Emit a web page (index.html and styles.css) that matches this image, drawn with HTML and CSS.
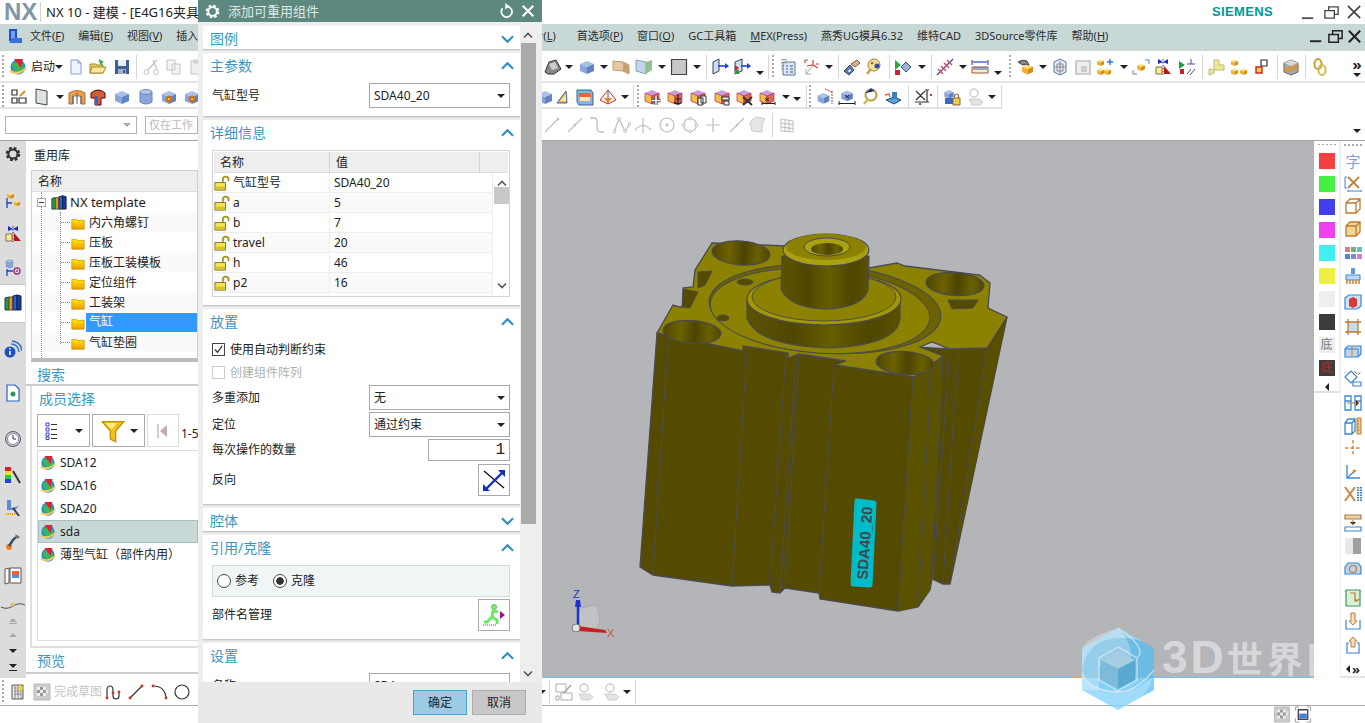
FILE: index.html
```html
<!DOCTYPE html>
<html lang="zh-CN">
<head>
<meta charset="utf-8">
<title>NX 10 - 建模</title>
<link rel="stylesheet" href="styles.css">
</head>
<body>
<svg class="defs" aria-hidden="true">
<defs>
<linearGradient id="fg" x1="0" y1="0" x2="0" y2="1"><stop offset="0" stop-color="#ffe800"/><stop offset="1" stop-color="#f09a00"/></linearGradient>
<linearGradient id="holeg" x1="0" y1="0" x2="1" y2="0"><stop offset="0" stop-color="#4f4600"/><stop offset=".3" stop-color="#6c6200"/><stop offset=".55" stop-color="#4c4400"/><stop offset=".8" stop-color="#6a6000"/><stop offset="1" stop-color="#4f4600"/></linearGradient>
<linearGradient id="neckg" x1="0" y1="0" x2="1" y2="0"><stop offset="0" stop-color="#5c5300"/><stop offset=".3" stop-color="#504700"/><stop offset=".55" stop-color="#665c00"/><stop offset=".8" stop-color="#4f4600"/><stop offset="1" stop-color="#5a5100"/></linearGradient>
<symbol id="cube" viewBox="0 0 18 18"><path fill="#a9c0e8" d="M2 6l7-3 7 3-7 3z"/><path fill="#8aa6d8" d="M2 6l7 3v7l-7-3z"/><path fill="#5f82c4" d="M16 6l-7 3v7l7-3z"/></symbol>
<symbol id="ocube" viewBox="0 0 18 18"><path fill="#ffe27a" d="M2 6l7-3 7 3-7 3z"/><path fill="#f0b030" d="M2 6l7 3v7l-7-3z"/><path fill="#d88a10" d="M16 6l-7 3v7l7-3z"/></symbol>
<symbol id="pcube" viewBox="0 0 18 18"><path fill="#c8a0d8" d="M2 5l7-3 7 3-7 3z"/><path fill="#f4c040" stroke="#a05" stroke-width=".6" d="M2 5l7 3v8l-7-3z"/><path fill="#e06a50" stroke="#a05" stroke-width=".6" d="M16 5l-7 3v8l7-3z"/></symbol>
<symbol id="part" viewBox="0 0 18 18"><circle cx="9" cy="9" r="7.500" fill="#2a86dc"/><path fill="#38b858" d="M3 6q5-4 10-1l2 5-6 5-5-4z"/><path fill="#e0222a" d="M5 1l9 0-2 9z"/><path d="M1 13q8 5 16-3" stroke="#f0cc5c" stroke-width="2.200" fill="none"/></symbol>
<symbol id="doc" viewBox="0 0 18 18"><path fill="#eef2fb" stroke="#8a9cd0" d="M4 2h7l3 3v11H4z"/><path fill="none" stroke="#8a9cd0" d="M11 2v3h3"/></symbol>
<symbol id="folderopen" viewBox="0 0 18 18"><path fill="#e8d060" stroke="#a08a30" d="M1 6h6l1 1h6v8H1z"/><path fill="#f8e8a0" stroke="#a08a30" d="M3 9h14l-3 6H1z"/><path fill="#3aa845" d="M10 1l5 3-2 1 1 3-3-2-1-3z"/></symbol>
<symbol id="save" viewBox="0 0 18 18"><path fill="#3e5f92" d="M2 2h14v14H2z"/><path fill="#e8eef8" d="M5 2h8v6H5z"/><path fill="#9fb0c8" d="M5 11h8v5H5z"/><path fill="#3e5f92" d="M10 12h2v3h-2z"/></symbol>
<symbol id="scis" viewBox="0 0 18 18"><path fill="none" stroke="#c6c6c6" stroke-width="1.400" d="M15 2L6 12M11 2l4 10"/><circle cx="4.500" cy="14" r="2.400" fill="none" stroke="#c6c6c6"/><circle cx="14" cy="14" r="2.400" fill="none" stroke="#c6c6c6"/></symbol>
<symbol id="copy" viewBox="0 0 18 18"><path fill="#f4f4f4" stroke="#c4c4c4" d="M2 2h8v10H2zM7 6h8v10H7z"/></symbol>
<symbol id="paste" viewBox="0 0 18 18"><path fill="#eee" stroke="#c4c4c4" d="M3 3h10v13H3z"/><path fill="#ddd" stroke="#c4c4c4" d="M6 2h4v3H6z"/></symbol>
<symbol id="layers" viewBox="0 0 18 18"><path fill="none" stroke="#333" stroke-width="1.200" d="M2 2h5v5H2zM2 10h5v5H2zM9 10h7v5H9z"/><path stroke="#e08a20" stroke-width="2" d="M10 8l5-5"/></symbol>
<symbol id="plate" viewBox="0 0 18 18"><path fill="#dfe3df" stroke="#444" d="M3 1l11 2v14L3 15z"/></symbol>
<symbol id="arch" viewBox="0 0 18 18"><path fill="#e8a050" stroke="#c06a20" d="M1 5q8-5 16 0v11h-4V8H5v8H1z"/><path stroke="#3a60a0" d="M5 8v8M13 8v8M9 5v11"/></symbol>
<symbol id="tee" viewBox="0 0 18 18"><path fill="#d06030" stroke="#502" d="M2 5q7-6 14 0v5h-4v7H6v-7H2z"/><path fill="#3a60c0" d="M6 8h3v9H6z"/></symbol>
<symbol id="cyl" viewBox="0 0 18 18"><path fill="#8aa6d8" stroke="#6a84b8" d="M3 4v10q6 4 12 0V4z"/><ellipse cx="9" cy="4" rx="6" ry="2.400" fill="#b4c8ec" stroke="#6a84b8"/></symbol>
<symbol id="holec" viewBox="0 0 18 18"><use href="#cube"/><circle cx="9" cy="11" r="3" fill="#f05030" stroke="#a82"/><circle cx="9" cy="11" r="1.200" fill="#fc0"/></symbol>
<symbol id="sheet" viewBox="0 0 18 18"><path fill="#888" stroke="#333" d="M1 14l4-10 7-2 5 9-7 5H4z"/><path fill="#ccc" d="M5 6l6-2 3 6-6 2z"/></symbol>
<symbol id="tan" viewBox="0 0 18 18"><path fill="#e8c8a0" stroke="#b89a78" d="M1 3l10 1 6 3v9l-6-3-10-1z"/><path fill="#c8a070" d="M11 4l6 3v9l-6-3z"/></symbol>
<symbol id="sheet2" viewBox="0 0 18 18"><path fill="#c0d4ec" stroke="#8aa0b8" d="M1 2l10 2v12l-10-3z"/><path fill="#90c090" d="M11 4l6-2v10l-6 4z"/></symbol>
<symbol id="gsq" viewBox="0 0 18 18"><path fill="#c8c8c8" stroke="#444" stroke-width="1.200" d="M1.500 1.500h15v15h-15z"/></symbol>
<symbol id="mov" viewBox="0 0 18 18"><path fill="#cfdcf0" stroke="#345" d="M2 4l6-3v12l-6 3z"/><path stroke="#1a40e0" stroke-width="1.600" d="M7 8h8"/><path fill="#1a40e0" d="M14 5l4 3-4 3z"/></symbol>
<symbol id="mov2" viewBox="0 0 18 18"><path fill="#cfdcf0" stroke="#345" d="M2 4l7-3v12l-7 3z"/><path fill="#d02020" d="M2 7l4 3-4 3z"/><path fill="#2a9a3a" d="M3 12h3v4H3z"/><path stroke="#1a40e0" stroke-width="1.600" d="M8 8h7"/><path fill="#1a40e0" d="M14 5l4 3-4 3z"/></symbol>
<symbol id="notes" viewBox="0 0 18 18"><path fill="#dfe7f2" stroke="#5a7a8a" d="M4 4h12v13H4z"/><path fill="#eef" stroke="#7a9a9a" d="M2 2q3-1 6 0M2 5q3-1 6 0M2 8q2-1 3 0M2 11q2-1 3 0"/><path stroke="#35a" d="M7 8h2m2 0h3M7 11h2m2 0h3M7 14h2m2 0h3"/></symbol>
<symbol id="csys" viewBox="0 0 18 18"><path fill="none" stroke="#d04030" stroke-width="1.200" d="M4 8l6-1 5 3M10 7V2M2 2h3M2 2v3M13 6h3"/><path fill="none" stroke="#aaa" d="M10 8L3 16M3 11v5h5"/></symbol>
<symbol id="diam" viewBox="0 0 18 18"><path fill="#5c78b0" stroke="#345" d="M1 13l6-6 4 5-5 5z"/><path fill="#fff" d="M5 13l2-2 1 2-2 1z"/><path fill="#d8b090" stroke="#854" d="M8 6l6-4 3 3-5 4z"/></symbol>
<symbol id="key" viewBox="0 0 18 18"><circle cx="10" cy="7" r="6" fill="#f0e0a0" stroke="#a08030"/><circle cx="13" cy="8" r="2.500" fill="#3a4aa0"/><circle cx="8" cy="5" r="1.200" fill="#d04030"/><path stroke="#c8a030" stroke-width="2.400" d="M7 11l-4 5"/></symbol>
<symbol id="tri" viewBox="0 0 18 18"><path fill="#2aa844" d="M1 2l6 5-6 5z"/><path fill="#d02030" d="M1 12h5v5H1z"/><path fill="#9ab0d8" stroke="#456" d="M7 9l5-5 5 5-5 5z"/></symbol>
<symbol id="hatch" viewBox="0 0 18 18"><path stroke="#3a50a0" stroke-width="1.200" d="M1 17L17 1"/><path stroke="#e04060" stroke-width="1.400" d="M2 11l5 5M5 8l5 5M8 5l5 5M11 2l5 5"/></symbol>
<symbol id="ruler" viewBox="0 0 18 18"><path stroke="#333" d="M1 2v5M17 2v5"/><path stroke="#1a40e0" stroke-width="1.200" d="M2 4h14"/><path fill="#f8ecc0" stroke="#a05040" d="M1 9h16v6H1z"/><path stroke="#3a60c0" d="M3 9v3M5 9v3M7 9v3M9 9v3M11 9v3M13 9v3M15 9v3"/></symbol>
<symbol id="handcube" viewBox="0 0 18 18"><use href="#ocube" x="3" y="4" width="15" height="14"/><path fill="#888" stroke="#444" d="M1 4q4-3 9-1l2 4-3-1-2 1-3-1z"/></symbol>
<symbol id="wire" viewBox="0 0 18 18"><path fill="#e6ecf6" stroke="#5870b0" d="M3 4l6-3 6 3v10l-6 3-6-3z"/><path fill="none" stroke="#888" d="M6 6h6v7H6zM9 3v13M4 9h10"/></symbol>
<symbol id="gbox" viewBox="0 0 18 18"><path fill="#eee" stroke="#c0c0c0" stroke-width="1.600" d="M2 3h14v13H2z"/><path fill="#ccc" d="M7 8h6v6H7z"/></symbol>
<symbol id="cubeplus" viewBox="0 0 18 18"><use href="#ocube" x="0" y="0" width="9" height="9"/><use href="#ocube" x="0" y="9" width="9" height="9"/><use href="#ocube" x="7" y="9" width="9" height="9"/><path stroke="#2a70f0" stroke-width="1.400" d="M14 1v6M11 4h6"/></symbol>
<symbol id="cubecor" viewBox="0 0 18 18"><use href="#ocube" x="4" y="4" width="10" height="10"/><path fill="none" stroke="#5a80c0" d="M13 2h4v4M5 16H1v-4"/></symbol>
<symbol id="mirror" viewBox="0 0 18 18"><path fill="#1a30c0" d="M4 1l5 3 5-3v5l-5-2-5 2z"/><path stroke="#333" stroke-dasharray="1.500" d="M9 1v16"/><path fill="#f8f088" stroke="#865" d="M2 9h6v7H2z"/><path fill="#b81818" d="M10 8l7 8h-7z"/></symbol>
<symbol id="perp" viewBox="0 0 18 18"><path fill="#1aa040" d="M1 3l6 4-6 4z"/><path fill="#c82020" d="M2 11h4v5H2z"/><path stroke="#604090" d="M9 6h8M13 1v5M9 16l4-5M12 17l5-6"/></symbol>
<symbol id="ykey" viewBox="0 0 18 18"><path fill="#f0e890" stroke="#c0b880" d="M7 2h5v5h5v5H7zM2 11l5 1v3l-5 2z"/></symbol>
<symbol id="cubes3" viewBox="0 0 18 18"><use href="#ocube" x="0" y="0" width="9" height="9"/><use href="#ocube" x="0" y="9" width="9" height="9"/><use href="#ocube" x="9" y="9" width="9" height="9"/></symbol>
<symbol id="squares" viewBox="0 0 18 18"><path fill="#fff" stroke="#333" stroke-width="1.200" d="M8 2h6v6H8z"/><path fill="#fc4" stroke="#d02020" stroke-width="1.400" d="M3 9h6v6H3z"/></symbol>
<symbol id="gbox2" viewBox="0 0 18 18"><path fill="#a8a8a8" stroke="#666" d="M2 5l7-3 7 3v9l-7 3-7-3z"/><path fill="#d8d8d8" d="M2 5l7-3 7 3-7 3z"/><path fill="none" stroke="#e09020" stroke-width="1.400" d="M2 12l10-4 4 1-11 5z"/></symbol>
<symbol id="chain" viewBox="0 0 18 18"><ellipse cx="7" cy="6" rx="3.600" ry="5" fill="none" stroke="#c8a030" stroke-width="2"/><ellipse cx="11" cy="12" rx="3.600" ry="5" fill="none" stroke="#d8b850" stroke-width="2"/></symbol>
<symbol id="face" viewBox="0 0 18 18"><path fill="#f0b040" stroke="#3a60c0" d="M3 15L12 3l1 12z"/><path fill="#f8e8a0" d="M6 13l6-7v7z"/></symbol>
<symbol id="box3" viewBox="0 0 18 18"><path fill="#8fb0d8" stroke="#3a60a0" d="M1 2h14l2 3v12H3L1 14z"/><path fill="#f06040" d="M3 5h12v4H3z"/><path fill="#f8e8b0" d="M4 9h10v4H4z"/></symbol>
<symbol id="pyr" viewBox="0 0 18 18"><path fill="#f8f4e8" stroke="#d83020" d="M9 2l8 10-8 4-8-4z"/><path stroke="#3a60c0" d="M9 2v14"/><path fill="#e88030" d="M5 10h8l-4 5z"/></symbol>
<symbol id="pplus" viewBox="0 0 18 18"><use href="#pcube"/><path stroke="#444" stroke-width="3.400" d="M13 8v9M8.500 12.500h9"/><path stroke="#eee" stroke-width="1.600" d="M13 8v9M8.500 12.500h9"/></symbol>
<symbol id="panch" viewBox="0 0 18 18"><use href="#pcube"/><path fill="none" stroke="#222" stroke-width="1.200" d="M12 6v11M9 11h6M8 14q4 4 8 0"/></symbol>
<symbol id="pcopy" viewBox="0 0 18 18"><use href="#pcube"/><path fill="#fff" stroke="#333" d="M9 10h5v7H9zM12 8h5v7h-5z"/></symbol>
<symbol id="pscale" viewBox="0 0 18 18"><use href="#pcube"/><path fill="#eee" stroke="#333" d="M9 9h7v3H9zM11 13h5v4h-5z"/></symbol>
<symbol id="px" viewBox="0 0 18 18"><use href="#pcube"/><path stroke="#333" stroke-width="2" d="M8 9l9 8M17 9l-9 8"/></symbol>
<symbol id="pdim" viewBox="0 0 18 18"><use href="#pcube"/><path stroke="#222" d="M7 10l4 3m0-3l-4 3M4 14v3M17 14v3M4 15.500h13"/></symbol>
<symbol id="dimbox" viewBox="0 0 18 18"><use href="#cube" x="0" y="2" width="15" height="16"/><path stroke="#d03030" stroke-dasharray="2 1" d="M16 3v13M9 1l7 3"/></symbol>
<symbol id="xdim" viewBox="0 0 18 18"><use href="#cube" x="1" y="0" width="16" height="15"/><path stroke="#222" d="M7 7l4 3m0-3l-4 3M1 13v4M17 13v4M1 15.500h16"/></symbol>
<symbol id="keyg" viewBox="0 0 18 18"><circle cx="10" cy="7" r="5.500" fill="none" stroke="#b8a040" stroke-width="2"/><path stroke="#3a50a0" stroke-width="1.600" d="M5 5l5-4 3 2"/><path stroke="#d8b840" stroke-width="2.400" d="M7 11l-4 5"/></symbol>
<symbol id="mach" viewBox="0 0 18 18"><path fill="#5aa0d8" stroke="#246" d="M2 12l8-3 7 3-7 4z"/><path fill="#3a80c0" d="M8 4h5v7H8z"/><path stroke="#e06030" stroke-width="1.400" fill="none" d="M1 7l4-1 1 3"/></symbol>
<symbol id="xi" viewBox="0 0 18 18"><path stroke="#333" stroke-width="1.200" d="M2 3l9 9M11 3l-9 9M13 2v12M11 2h4M11 14h4M1 14h11"/><path stroke="#d03030" d="M16 6l2 2m0-2l-2 2M5 15l2 2m0-2l-2 2"/></symbol>
<symbol id="lockc" viewBox="0 0 18 18"><use href="#cube" x="0" y="0" width="12" height="12"/><path fill="#3a6ac8" d="M2 10h9v6H2z"/><path fill="#f0d040" stroke="#864" d="M10 10h7v7h-7z"/><path fill="none" stroke="#864" stroke-width="1.200" d="M11.500 10V8a2 2 0 0 1 4 0v2"/></symbol>
<symbol id="ghand" viewBox="0 0 18 18"><circle cx="8" cy="5" r="4" fill="none" stroke="#ccc" stroke-width="1.400"/><path fill="#e4e4e4" stroke="#ccc" d="M3 11h10l4 3-3 3H6z"/></symbol>
<symbol id="gsk" viewBox="0 0 18 18"><path fill="none" stroke="#aaa" d="M1 1h10v8H1zM6 10h11v7H6zM1 13h3v4H1z"/><path stroke="#aaa" stroke-width="1.600" d="M9 10l7-8"/></symbol>
<symbol id="g1" viewBox="0 0 18 18"><path fill="none" stroke="#bdbdbd" stroke-width="1.100" d="M2 16L15 3"/><circle cx="15" cy="3" r="1.300" fill="#bdbdbd"/></symbol>
<symbol id="g2" viewBox="0 0 18 18"><path fill="none" stroke="#bdbdbd" stroke-width="1.100" d="M2 16L16 2"/><circle cx="9" cy="9" r="1.300" fill="#bdbdbd"/></symbol>
<symbol id="g3" viewBox="0 0 18 18"><path fill="none" stroke="#bdbdbd" stroke-width="1.300" d="M2 2h4q3 0 3 4v6q0 4 4 4h3"/></symbol>
<symbol id="g4" viewBox="0 0 18 18"><path fill="none" stroke="#bdbdbd" stroke-width="1.200" d="M1 16L6 3l6 12 5-7"/><g fill="#fff" stroke="#bdbdbd"><circle cx="6" cy="3" r="1.400"/><circle cx="12" cy="15" r="1.400"/><circle cx="1.500" cy="15.500" r="1.400"/><circle cx="16.500" cy="8" r="1.400"/></g></symbol>
<symbol id="g5" viewBox="0 0 18 18"><path fill="none" stroke="#bdbdbd" stroke-width="1.200" d="M1 14q8-9 16 0M9 2v15"/></symbol>
<symbol id="g6" viewBox="0 0 18 18"><circle cx="9" cy="9" r="7" fill="none" stroke="#bdbdbd" stroke-width="1.200"/><circle cx="9" cy="9" r="1.400" fill="#bdbdbd"/></symbol>
<symbol id="g7" viewBox="0 0 18 18"><circle cx="9" cy="9" r="6.500" fill="none" stroke="#bdbdbd" stroke-width="1.200"/><g fill="#fff" stroke="#bdbdbd"><circle cx="9" cy="2.500" r="1.400"/><circle cx="9" cy="15.500" r="1.400"/><circle cx="2.500" cy="9" r="1.400"/><circle cx="15.500" cy="9" r="1.400"/></g></symbol>
<symbol id="g8" viewBox="0 0 18 18"><path stroke="#bdbdbd" stroke-width="1.200" d="M9 2v14M2 9h14"/></symbol>
<symbol id="g9" viewBox="0 0 18 18"><path fill="#e6e6e6" stroke="#ccc" d="M2 8q1-6 8-7l7 2q-3 2-3 8v5L4 15z"/></symbol>
<symbol id="g10" viewBox="0 0 18 18"><path fill="none" stroke="#bdbdbd" d="M3 3l12 2v11L3 15zM7 4v11.500M11 4.500V16M3 7l12 1.500M3 11l12 1.500"/></symbol>
<symbol id="gear" viewBox="0 0 18 18"><circle cx="9" cy="9" r="5.600" fill="none" stroke="currentColor" stroke-width="3.400" stroke-dasharray="2.500 1.900"/><circle cx="9" cy="9" r="4.600" fill="none" stroke="currentColor" stroke-width="2"/></symbol>
<symbol id="asm" viewBox="0 0 18 18"><use href="#ocube" x="2" y="0" width="9" height="9"/><use href="#ocube" x="9" y="8" width="8" height="8"/><path fill="none" stroke="#1a40d0" stroke-width="1.300" d="M3 7v10M3 12h5"/></symbol>
<symbol id="dbc" viewBox="0 0 18 18"><use href="#cyl" x="0" y="0" width="11" height="10"/><path fill="none" stroke="#1a40d0" stroke-width="1.300" d="M3 10v7M3 12h6"/><circle cx="13" cy="12" r="3" fill="none" stroke="#a03080" stroke-width="1.400"/><circle cx="13" cy="12" r="1" fill="#a03080"/></symbol>
<symbol id="books" viewBox="0 0 18 18"><path fill="#2a9a3a" stroke="#145" d="M1 5l4-1v13H1z"/><path fill="#e89020" stroke="#652" d="M5 4h4v13H5z"/><path fill="#2a60d8" stroke="#124" d="M9 3l4-1v15H9z"/><path fill="#1a3aa0" stroke="#124" d="M13 2l4 1v14h-4z"/></symbol>
<symbol id="rss" viewBox="0 0 18 18"><circle cx="6" cy="12" r="5.500" fill="#1a50c8"/><path stroke="#fff" stroke-width="1.600" d="M6 11v4M6 8v1.600"/><path fill="none" stroke="#3a70c0" stroke-width="1.500" d="M7 4q7 0 8 8M8 1q9 1 10 10"/></symbol>
<symbol id="bdoc" viewBox="0 0 18 18"><path fill="#fff" stroke="#2a60c8" stroke-width="1.200" d="M3 1h8l4 4v12H3z"/><circle cx="9" cy="10" r="2.500" fill="#2a9a5a"/></symbol>
<symbol id="clock" viewBox="0 0 18 18"><circle cx="9" cy="9" r="7.500" fill="#c8d0dc" stroke="#556"/><circle cx="9" cy="9" r="5.500" fill="#fff" stroke="#889"/><path stroke="#235" fill="none" d="M9 5v4h3"/></symbol>
<symbol id="wand" viewBox="0 0 18 18"><path fill="#e02020" d="M1 1h6v4H1z"/><path fill="#f0e020" d="M1 5h6v4H1z"/><path fill="#20d040" d="M1 9h6v4H1z"/><path fill="#2040e0" d="M1 13h6v4H1z"/><path stroke="#333" stroke-width="2" d="M9 5l7 12"/></symbol>
<symbol id="ana" viewBox="0 0 18 18"><path fill="#5a8ad8" d="M3 1h4v8l8-2-4 4H3z"/><path stroke="#345" stroke-width="2" d="M9 9l6 8"/><path stroke="#e0a020" stroke-dasharray="1 1" stroke-width="2" d="M2 15h9"/></symbol>
<symbol id="robot" viewBox="0 0 18 18"><circle cx="5" cy="14" r="3" fill="#f08020"/><path stroke="#3a4a60" stroke-width="2.400" fill="none" d="M5 13l4-6 3-3"/><path fill="#667" d="M11 1l5 3-3 2z"/></symbol>
<symbol id="pan" viewBox="0 0 18 18"><path fill="#fff" stroke="#555" d="M1 2l4-1v15l-4 1zM6 1h11v15H6z"/><path fill="#f06040" d="M8 4h7v4H8z"/><path fill="#4a90e0" d="M8 8h7v3H8z"/></symbol>
<symbol id="curve" viewBox="0 0 26 18"><path fill="none" stroke="#555" stroke-width="1" d="M1 10q6 3 12-1t12-1"/><path stroke="#e8c030" stroke-width="1.500" d="M11 6l3 3m0-3l-3 3"/></symbol>
<symbol id="skt" viewBox="0 0 18 18"><path fill="#eee" stroke="#555" d="M3 2h11v14H3z"/><path stroke="#888" d="M5 5h7M5 8h7M5 11h7M6 2v14M9 2v14M12 2v14"/><path fill="#f0d040" d="M11 1l2 3 3 1-3 1-2 3-1-3-3-1 3-1z"/></symbol>
<symbol id="flag" viewBox="0 0 18 18"><path fill="#ccc" stroke="#bbb" d="M1 1h16v16H1z"/><path fill="#eee" d="M4 4h3v3H4zM10 4h3v3h-3zM7 7h3v3H7zM13 7h2v3h-2zM4 10h3v3H4zM10 10h3v3h-3z"/><path fill="#999" d="M7 4h3v3H7zM4 7h3v3H4zM10 7h3v3h-3zM7 10h3v3H7z"/></symbol>
<symbol id="skc" viewBox="0 0 18 18"><path fill="none" stroke="#333" stroke-width="1.200" d="M2 15V7q0-4 3-4t3 4v6q0 3 3 3t3-3V8"/><g fill="#d83030"><circle cx="2" cy="15" r="1.400"/><circle cx="8" cy="10" r="1.400"/><circle cx="14" cy="9" r="1.400"/></g></symbol>
<symbol id="skl" viewBox="0 0 18 18"><path stroke="#333" stroke-width="1.200" d="M3 15L15 3"/><circle cx="3" cy="15" r="1.400" fill="#d83030"/><circle cx="15" cy="3" r="1.400" fill="#d83030"/></symbol>
<symbol id="ska" viewBox="0 0 18 18"><path fill="none" stroke="#333" stroke-width="1.200" d="M2 3q12 0 13 12"/><circle cx="2" cy="3" r="1.400" fill="#d83030"/><circle cx="15" cy="15" r="1.400" fill="#d83030"/></symbol>
<symbol id="skr" viewBox="0 0 18 18"><circle cx="9" cy="9" r="7" fill="none" stroke="#333" stroke-width="1.200"/></symbol>
<symbol id="fit" viewBox="0 0 18 18"><path fill="none" stroke="#999" d="M1 5V1h4M13 1h4v4M17 13v4h-4M5 17H1v-4"/><path fill="#fff" stroke="#445" stroke-width="1.400" d="M4 4h10v10H4z"/><path fill="#4a80d0" d="M5 8h8v5H5z"/></symbol>
<symbol id="folder" viewBox="0 0 18 18"><path fill="url(#fg)" stroke="#b07a00" stroke-width=".6" d="M2 5h5l1 1h8v10H2z"/></symbol>
<symbol id="lock" viewBox="0 0 18 18"><path fill="none" stroke="#a89420" stroke-width="2" d="M10 9V5a3.200 3.200 0 0 1 6.400 0v2"/><path fill="#f6e64e" stroke="#6e6a30" d="M1 8.500h12V17H1z"/><path fill="#d8c030" d="M1.500 13h11v3.500h-11z"/></symbol>
<symbol id="listv" viewBox="0 0 18 18"><path fill="#fff" stroke="#3a40d0" d="M2 1h3v3H2zM2 6h3v3H2zM2 11h3v3H2zM2 15h3v2.500H2z"/><path stroke="#333" d="M7 2.500h6M7 7.500h6M7 12.500h6M7 16.500h6"/></symbol>
<symbol id="funnel" viewBox="0 0 18 18"><path fill="#f0c020" stroke="#c89000" d="M1 2h16l-6 7v8l-4-2V9z"/><path fill="#ffe880" d="M3 3h9l-4 5z"/></symbol>
<symbol id="prevp" viewBox="0 0 18 18"><path stroke="#b8a8b0" stroke-width="1.200" d="M5 2v14"/><path fill="#c8a8a8" d="M14 3L7 9l7 6z"/></symbol>
<symbol id="rev" viewBox="0 0 24 24"><path stroke="#111" stroke-width="1.300" d="M2 3l20 17"/><path stroke="#1230c0" stroke-width="2.400" d="M4 21L20 5"/><path fill="#1230c0" d="M16 2h7v7zM1 16l7 7H1z"/></symbol>
<symbol id="runner" viewBox="0 0 24 24"><circle cx="12" cy="4" r="2.500" fill="#7ef07e" stroke="#2a9a2a" stroke-width=".6"/><path fill="none" stroke="#6ae86a" stroke-width="3" d="M11 7l-1 7 5 3v4M10 14l-5 5-3 0M11 8l5 1"/><path fill="#a0108a" d="M18 8l5 4-5 4z"/><path stroke="#555" stroke-dasharray="1 1" d="M1 22h14"/></symbol>
<symbol id="resetw" viewBox="0 0 18 18"><path fill="none" stroke="#fff" stroke-width="2" d="M4 6a6 6 0 1 0 6-2"/><path fill="#fff" d="M7 0l5 4-5 3z"/></symbol>
<symbol id="closew" viewBox="0 0 18 18"><path stroke="#fff" stroke-width="2.400" d="M3 3l12 12M15 3L3 15"/></symbol>
<symbol id="up" viewBox="0 0 14 10"><path fill="none" stroke="#2d8fc4" stroke-width="2.200" d="M1 8l6-6 6 6"/></symbol>
<symbol id="down" viewBox="0 0 14 10"><path fill="none" stroke="#2d8fc4" stroke-width="2.200" d="M1 2l6 6 6-6"/></symbol>
<symbol id="sup" viewBox="0 0 12 8"><path fill="none" stroke="#555" stroke-width="1.600" d="M2 6.500l4-4 4 4"/></symbol>
<symbol id="sdn" viewBox="0 0 12 8"><path fill="none" stroke="#555" stroke-width="1.600" d="M2 1.500l4 4 4-4"/></symbol>
<symbol id="r2" viewBox="0 0 18 18"><path stroke="#c87f3e" stroke-width="1.800" d="M4 2l11 11M15 2L4 13"/><path stroke="#3a86d8" fill="none" d="M1 2v11M1 2h2M1 13h2M4 16h13M4 15v2M17 15v2"/></symbol>
<symbol id="r3" viewBox="0 0 18 18"><path fill="none" stroke="#c07a30" stroke-width="1.300" d="M2 6l4-4h10v10l-4 4H2zM2 6h10v10M12 6l4-4"/></symbol>
<symbol id="r4" viewBox="0 0 18 18"><path fill="#f0d890" stroke="#c07a30" stroke-width="1.300" d="M2 6l4-4h10v10l-4 4H2z"/><path fill="none" stroke="#c07a30" stroke-width="1.300" d="M2 6h10v10M12 6l4-4"/></symbol>
<symbol id="r5" viewBox="0 0 18 18"><path fill="#d88080" d="M1 3h5v5H1z"/><path fill="#70b070" d="M7 3h5v5H7z"/><path fill="#60c0c0" d="M13 3h5v5h-5z"/><path fill="#5088d8" d="M1 10h5v5H1z"/><path fill="#8888d0" d="M7 10h5v5H7z"/><path fill="#d080d0" d="M13 10h5v5h-5z"/></symbol>
<symbol id="r6" viewBox="0 0 18 18"><path fill="#5a9ee0" d="M7 1h4v6H7z"/><path fill="#bcd8f4" stroke="#3a86d8" d="M2 8h14v5H2z"/><path stroke="#d08030" stroke-width="1.500" d="M3 13v4M6 13v4M9 13v4M12 13v4M15 13v4"/></symbol>
<symbol id="r7" viewBox="0 0 18 18"><path fill="#cfe2f4" stroke="#3a86d8" stroke-width="1.200" d="M1 5l4-3h12v11l-4 3H1z"/><path fill="#d83a3a" d="M5 6l4-2 4 2v7l-4 2-4-2z"/></symbol>
<symbol id="r8" viewBox="0 0 18 18"><path fill="#c4daf0" d="M4 4h10v10H4z"/><path stroke="#c07a30" stroke-width="1.300" d="M4 1v16M14 1v16M1 4h16M1 14h16"/></symbol>
<symbol id="r9" viewBox="0 0 18 18"><path fill="#bcd6f0" stroke="#3a86d8" stroke-width="1.200" d="M1 7l3-3h13v8l-3 3H1z"/><path stroke="#e09a30" stroke-width="1.400" d="M8 4v11"/><path fill="none" stroke="#3a86d8" d="M14 7v8M1 7h13"/></symbol>
<symbol id="r10" viewBox="0 0 18 18"><path fill="none" stroke="#3a86d8" stroke-width="1.200" d="M1 8l6-6 6 6-6 6zM9 13h8v4H9z"/><path stroke="#c07a30" d="M10 2l3 3M14 6l2-2"/></symbol>
<symbol id="r11" viewBox="0 0 18 18"><path fill="none" stroke="#3a86d8" stroke-width="1.300" d="M1 3h6v14H1zM11 3h6v14h-6zM1 8h6M11 8h6"/><path stroke="#c07a30" d="M3 10h12M12 7l3 3-3 3"/></symbol>
<symbol id="r12" viewBox="0 0 18 18"><path fill="none" stroke="#3a86d8" stroke-width="1.300" d="M1 6l3-4h7v12l-3 3H1zM1 6h7v11M8 6l3-4"/><path fill="#e8c890" stroke="#c07a30" d="M13 1h4v16h-4zM13 4h2M13 7h2M13 10h2M13 13h2"/></symbol>
<symbol id="r13" viewBox="0 0 18 18"><path stroke="#d0883c" stroke-width="1.400" stroke-dasharray="3.500 2" d="M9 1v16M1 9h16"/></symbol>
<symbol id="r14" viewBox="0 0 18 18"><path fill="none" stroke="#3a86d8" stroke-width="1.300" d="M3 3v13h13M3 16l9-8"/><circle cx="10" cy="9" r="1.500" fill="#d0883c"/></symbol>
<symbol id="r15" viewBox="0 0 18 18"><path stroke="#c8874a" stroke-width="2" d="M1 2l10 14M11 2L1 16"/><path stroke="#3a86d8" stroke-dasharray="1.500 1" stroke-width="2" d="M14 2v14M17 2v14"/></symbol>
<symbol id="r16" viewBox="0 0 18 18"><path fill="#e8d4b0" stroke="#b07a40" stroke-width="1.200" d="M1 1h16v4H1z"/><path stroke="#c07a30" d="M9 6v5M6 8l3 3 3-3"/><path fill="#fff" stroke="#3a86d8" stroke-width="1.200" d="M1 13h16v4H1z"/></symbol>
<symbol id="r17" viewBox="0 0 18 18"><path fill="#e8e8e8" d="M1 1h8v16H1z"/><path fill="#a0a0a0" d="M9 1h8v16H9z"/></symbol>
<symbol id="r18" viewBox="0 0 18 18"><path fill="#bcd6f0" stroke="#3a86d8" stroke-width="1.200" d="M1 8l3-4h10l3 4v7H1z"/><circle cx="9" cy="10" r="3.500" fill="none" stroke="#c07a30" stroke-width="1.200"/></symbol>
<symbol id="r19" viewBox="0 0 18 18"><path fill="#d8efd8" stroke="#3a9a60" stroke-width="1.200" d="M2 1h14v16H2z"/><path fill="none" stroke="#c07a30" stroke-width="1.200" d="M6 4h5v8h2M11 10l2 2 2-2"/></symbol>
<symbol id="r20" viewBox="0 0 18 18"><path fill="#f4e0c0" stroke="#c07a30" d="M7 1h4v8h2l-4 4-4-4h2z"/><path fill="none" stroke="#3a86d8" stroke-width="1.200" d="M2 8v9h14V8"/></symbol>
<symbol id="r21" viewBox="0 0 18 18"><path fill="#f4e0c0" stroke="#c07a30" d="M7 11h4V5h2L9 1 5 5h2z"/><path fill="none" stroke="#3a86d8" stroke-width="1.200" d="M5 7H3v10h12V7h-2"/></symbol>
</defs>
</svg>

<header class="titlebar">
  <span class="logo">NX</span>
  <span class="title">NX 10 - 建模 - [E4G16夹具</span>
  <span class="siemens">SIEMENS</span>
  <span class="win">
    <svg class="wc" viewBox="0 0 18 18"><path stroke="#555" stroke-width="2" d="M2 15h12"/></svg>
    <svg class="wc" viewBox="0 0 18 18"><path fill="none" stroke="#444" stroke-width="1.400" d="M2 7h10v8H2zM6 7V3h10v8h-4"/></svg>
    <svg class="wc" viewBox="0 0 18 18"><path stroke="#444" stroke-width="1.800" d="M2 2l13 13M15 2L2 15"/></svg>
  </span>
</header>

<nav class="menubar">
  <svg class="ic appic" viewBox="0 0 18 18"><path fill="#2050c8" d="M3 2h8v12H3z"/><path fill="#78a0e8" d="M5 4h4v8H5z"/><path fill="#3a70d8" d="M7 11h9v5H3z"/></svg>
  <span>文件(<u>F</u>)</span>
  <span>编辑(<u>E</u>)</span>
  <span>视图(<u>V</u>)</span>
  <span>插入</span>
  <span class="skip">分析(<u>L</u>)</span>
  <span class="prefs">首选项(<u>P</u>)</span>
  <span>窗口(<u>O</u>)</span>
  <span>GC工具箱</span>
  <span><u>M</u>EX(Press)</span>
  <span>燕秀UG模具6.32</span>
  <span>维特CAD</span>
  <span>3DSource零件库</span>
  <span>帮助(<u>H</u>)</span>
  <span class="subwin">
    <svg class="wc" viewBox="0 0 18 18"><path stroke="#222" stroke-width="2" d="M2 14h12"/></svg>
    <svg class="wc" viewBox="0 0 18 18"><path fill="none" stroke="#222" stroke-width="1.600" d="M2 7h10v8H2zM6 7V3h10v8h-4"/></svg>
    <svg class="wc" viewBox="0 0 18 18"><path stroke="#222" stroke-width="2.200" d="M3 3l12 12M15 3L3 15"/></svg>
  </span>
</nav>

<div class="tb tb1"><div class="tools t1">
  <i class="g"></i>
  <svg class="ic"><use href="#part"/></svg>
  <span class="tx">启动</span>
  <i class="d"></i>
  <svg class="ic"><use href="#doc"/></svg>
  <svg class="ic"><use href="#folderopen"/></svg>
  <svg class="ic"><use href="#save"/></svg>
  <i class="s"></i>
  <svg class="ic"><use href="#scis"/></svg>
  <svg class="ic"><use href="#copy"/></svg>
  <svg class="ic"><use href="#paste"/></svg>
  <svg class="ic"><use href="#sheet"/></svg><i class="d"></i>
  <svg class="ic"><use href="#cube"/></svg><i class="d"></i>
  <svg class="ic"><use href="#tan"/></svg>
  <svg class="ic"><use href="#sheet2"/></svg><i class="d"></i>
  <svg class="ic"><use href="#gsq"/></svg><i class="d"></i><i class="s"></i>
  <svg class="ic"><use href="#mov"/></svg>
  <svg class="ic"><use href="#mov2"/></svg><i class="d low"></i><i class="s"></i><i class="g"></i>
  <svg class="ic"><use href="#notes"/></svg>
  <svg class="ic"><use href="#csys"/></svg><i class="d"></i><i class="s"></i>
  <svg class="ic"><use href="#diam"/></svg>
  <svg class="ic"><use href="#key"/></svg><i class="s"></i>
  <svg class="ic"><use href="#tri"/></svg><i class="d"></i><i class="s"></i>
  <svg class="ic"><use href="#hatch"/></svg><i class="d"></i>
  <svg class="ic"><use href="#ruler"/></svg><i class="d low"></i><i class="g"></i>
  <svg class="ic"><use href="#handcube"/></svg><i class="d"></i>
  <svg class="ic"><use href="#wire"/></svg>
  <svg class="ic"><use href="#gbox"/></svg>
  <svg class="ic"><use href="#cubeplus"/></svg><i class="d"></i>
  <svg class="ic"><use href="#cubecor"/></svg>
  <svg class="ic"><use href="#mirror"/></svg>
  <svg class="ic"><use href="#perp"/></svg><i class="s"></i>
  <svg class="ic"><use href="#ykey"/></svg>
  <svg class="ic"><use href="#cubes3"/></svg>
  <svg class="ic"><use href="#squares"/></svg><i class="s"></i>
  <svg class="ic"><use href="#gbox2"/></svg><i class="s"></i>
  <svg class="ic"><use href="#chain"/></svg>
  <span class="more"><b>»</b><i class="d"></i></span>
</div></div>

<div class="tb tb2"><div class="tools t2">
  <i class="g"></i>
  <svg class="ic"><use href="#layers"/></svg>
  <svg class="ic"><use href="#plate"/></svg><i class="d"></i>
  <svg class="ic"><use href="#arch"/></svg>
  <svg class="ic"><use href="#tee"/></svg>
  <svg class="ic"><use href="#cube"/></svg>
  <svg class="ic"><use href="#cyl"/></svg>
  <svg class="ic"><use href="#holec"/></svg>
  <svg class="ic"><use href="#holec"/></svg>
  <svg class="ic"><use href="#cube"/></svg>
  <svg class="ic"><use href="#face"/></svg>
  <svg class="ic"><use href="#box3"/></svg>
  <svg class="ic"><use href="#pyr"/></svg><i class="d"></i><i class="s"></i><i class="g"></i>
  <svg class="ic"><use href="#pplus"/></svg>
  <svg class="ic"><use href="#panch"/></svg>
  <svg class="ic"><use href="#pcopy"/></svg>
  <svg class="ic"><use href="#pscale"/></svg>
  <svg class="ic"><use href="#px"/></svg>
  <svg class="ic"><use href="#pdim"/></svg><i class="d"></i><i class="d low2"></i><i class="s"></i><i class="g"></i>
  <svg class="ic"><use href="#dimbox"/></svg>
  <svg class="ic"><use href="#xdim"/></svg>
  <svg class="ic"><use href="#keyg"/></svg>
  <svg class="ic"><use href="#mach"/></svg><i class="s"></i>
  <svg class="ic"><use href="#xi"/></svg><i class="s"></i>
  <svg class="ic"><use href="#lockc"/></svg>
  <svg class="ic"><use href="#ghand"/></svg><i class="d"></i><i class="s"></i>
</div></div>

<div class="tb tb3"><div class="tools t3">
  <span class="combo c1"><i class="d dim"></i></span>
  <span class="combo c2">仅在工作</span>
  <svg class="ic"><use href="#g1"/></svg>
  <svg class="ic"><use href="#g2"/></svg>
  <svg class="ic"><use href="#g3"/></svg>
  <svg class="ic"><use href="#g4"/></svg>
  <svg class="ic"><use href="#g5"/></svg>
  <svg class="ic"><use href="#g6"/></svg>
  <svg class="ic"><use href="#g7"/></svg>
  <svg class="ic"><use href="#g8"/></svg>
  <svg class="ic"><use href="#g2"/></svg>
  <svg class="ic"><use href="#g9"/></svg><i class="s"></i>
  <svg class="ic"><use href="#g10"/></svg>
  <i class="d low"></i>
</div></div>

<main class="main">
  <aside class="rail">
    <svg class="ic gearb"><use href="#gear"/></svg>
    <svg class="ic"><use href="#asm"/></svg>
    <svg class="ic"><use href="#mirror"/></svg>
    <svg class="ic"><use href="#dbc"/></svg>
    <span class="on"><svg class="ic"><use href="#books"/></svg></span>
    <svg class="ic"><use href="#rss"/></svg>
    <svg class="ic"><use href="#bdoc"/></svg>
    <svg class="ic"><use href="#clock"/></svg>
    <svg class="ic"><use href="#wand"/></svg>
    <svg class="ic"><use href="#ana"/></svg>
    <svg class="ic"><use href="#robot"/></svg>
    <svg class="ic"><use href="#pan"/></svg>
    <svg class="ic wide"><use href="#curve"/></svg>
    <span class="arr up2"></span>
    <span class="arr up1"></span>
    <span class="arr dn1"></span>
    <span class="arr dn2"></span>
  </aside>

  <section class="panel">
    <h2 class="ptitle">重用库</h2>
    <div class="treebox">
      <div class="treehead">名称</div>
      <div class="tree">
        <div class="tr root"><span class="exp"></span><svg class="ic16"><use href="#books"/></svg><span>NX template</span></div>
        <div class="tr leaf alt"><svg class="ic16"><use href="#folder"/></svg><span>内六角螺钉</span></div>
        <div class="tr leaf"><svg class="ic16"><use href="#folder"/></svg><span>压板</span></div>
        <div class="tr leaf alt"><svg class="ic16"><use href="#folder"/></svg><span>压板工装模板</span></div>
        <div class="tr leaf"><svg class="ic16"><use href="#folder"/></svg><span>定位组件</span></div>
        <div class="tr leaf alt"><svg class="ic16"><use href="#folder"/></svg><span>工装架</span></div>
        <div class="tr leaf cur"><svg class="ic16"><use href="#folder"/></svg><span>气缸</span></div>
        <div class="tr leaf alt"><svg class="ic16"><use href="#folder"/></svg><span>气缸垫圈</span></div>
      </div>
    </div>
    <h3 class="pgroup search">搜索</h3>
    <div class="members">
      <h3 class="pgroup">成员选择</h3>
      <div class="mtools">
        <span class="mbtn"><svg class="ic"><use href="#listv"/></svg><i class="d sm"></i></span>
        <span class="mbtn"><svg class="ic big"><use href="#funnel"/></svg><i class="d sm"></i></span>
        <span class="mbtn light"><svg class="ic"><use href="#prevp"/></svg></span>
        <span class="count">1-5</span>
      </div>
      <ul class="mlist">
        <li><svg class="ic16"><use href="#part"/></svg>SDA12</li>
        <li><svg class="ic16"><use href="#part"/></svg>SDA16</li>
        <li><svg class="ic16"><use href="#part"/></svg>SDA20</li>
        <li class="on2"><svg class="ic16"><use href="#part"/></svg>sda</li>
        <li><svg class="ic16"><use href="#part"/></svg>薄型气缸（部件内用）</li>
      </ul>
    </div>
    <h3 class="pgroup preview">预览</h3>
  </section>

  <section class="vp">
    <svg class="scene" viewBox="198 141 1115 536">
      <path fill="#544b00" stroke="#4a4a50" stroke-width="1.300" d="M657 333L640 567 653 575 732 586 770 585 772 592 780 593 785 588 819 593 820 599 898 611 918 607 930 590 932 579 943 584 950 584 1007 317 987 348 950 349z"/>
      <path fill="#5b5200" d="M943 356L913 377 898 611 918 607 930 590z"/>
      <path fill="#574e00" d="M987 348L1007 317 950 584z"/>
      <g fill="none" stroke="#4a4a50" stroke-width="1.200">
        <path d="M668 342L653 575M747 351L732 586M786 354L770 585M796 357L780 593M799 355L785 588M834 366L819 593M913 377L898 611M943 356L932 579M932 360L918 607M950 349L933 579M958 352L943 584M987 348L950 584"/>
      </g>
      <path fill="#8c8200" stroke="#4a4a50" stroke-width="1.300" d="M657 333L743 351 743 346 788 353 788 358 799 354 846 361 835 365 914 377 943 356 920 347 932 342 950 349 987 348 1007 317 988 308 990 283 980 275 905 266 897 263 869 268 787 246 712 243 695 270 693 287 683 288 686 306 680 307 673 305z"/>
      <path fill="#544b00" stroke="#4a4a50" d="M698 272L712 271 705 285 698 288zM683 289L698 292 690 308 682 307zM948 300L978 300 973 308 952 309z"/>
      <g stroke="#4a4a50" stroke-width="1.300">
        <ellipse cx="741" cy="253" rx="29" ry="12" fill="url(#holeg)" transform="rotate(4 741 253)"/>
        <ellipse cx="955" cy="284" rx="29" ry="11.500" fill="url(#holeg)" transform="rotate(4 955 284)"/>
        <ellipse cx="692" cy="332" rx="29" ry="11.500" fill="url(#holeg)" transform="rotate(4 692 332)"/>
        <ellipse cx="905" cy="363" rx="29" ry="11.500" fill="url(#holeg)" transform="rotate(4 905 363)"/>
      </g>
      <ellipse cx="825" cy="309" rx="116" ry="44" fill="#6c6200" stroke="#4a4a50" stroke-width="1.200" transform="rotate(4 825 309)"/>
      <ellipse cx="820" cy="311" rx="110" ry="42" fill="#8c8200" stroke="#4a4a50" stroke-width="1" transform="rotate(4 820 311)"/>
      <ellipse cx="745" cy="282" rx="8" ry="3" fill="#544b00" stroke="#4a4a50"/>
      <ellipse cx="723" cy="318" rx="6" ry="3" fill="#544b00" stroke="#4a4a50"/>
      <path fill="url(#neckg)" stroke="#4a4a50" stroke-width="1.200" d="M747 300V318Q756 345 826 348 898 346 900 318V300z"/>
      <ellipse cx="824" cy="299" rx="77" ry="26" fill="#a39700" stroke="#4a4a50" stroke-width="1.200"/>
      <ellipse cx="824" cy="297" rx="72" ry="24" fill="#8c8200" stroke="#4a4a50" stroke-width=".9"/>
      <path fill="url(#neckg)" stroke="#4a4a50" stroke-width="1.200" d="M782 256L781 289Q790 308 825 309 862 308 868 290L869 256z"/>
      <ellipse cx="826" cy="250" rx="43" ry="16" fill="#a9a012" stroke="#4a4a50" stroke-width="1.200"/>
      <ellipse cx="826" cy="247" rx="40" ry="13" fill="#8c8200"/>
      <ellipse cx="827" cy="247" rx="23" ry="9" fill="#a9a012" stroke="#4a4a50"/>
      <ellipse cx="827" cy="249" rx="16" ry="6" fill="url(#holeg)"/>
      <path fill="#00bcc8" stroke="#00bcc8" stroke-width="5" stroke-linejoin="round" d="M857 501L874 503 870 585 853 584z"/>
      <text class="lbl" x="864" y="549" transform="rotate(-86 864 543)">SDA40_20</text>
      <g>
        <path fill="#d0d3d3" fill-opacity=".45" stroke="#a9adaa" d="M580 608L597 605 600 620 596 631 582 632 578 618z"/>
        <path stroke="#1a34d0" stroke-width="2.500" d="M578 626V604"/>
        <path fill="#1a34d0" d="M576 600h4l1 7h-6z"/>
        <text x="573" y="598" class="axz">Z</text>
        <path fill="#c82020" d="M578 626L605 630 607 633 578 631z"/>
        <text x="607" y="637" class="axx">X</text>
        <circle cx="576" cy="628" r="4" fill="#e4e4e4" stroke="#777"/>
      </g>
    </svg>
  </section>

  <aside class="colors">
    <i class="grip"></i>
    <span class="sw red"></span><span class="sw green"></span><span class="sw blue"></span><span class="sw mag"></span><span class="sw cyan"></span><span class="sw yel"></span><span class="sw lgt"></span><span class="sw drk"></span>
    <span class="sw lgt txt">底</span><span class="sw drk txt dark-red">底</span>
    <i class="tl"></i>
  </aside>
  <aside class="rtools">
    <i class="grip"></i>
    <span class="zi">字</span>
    <svg class="ic"><use href="#r2"/></svg>
    <svg class="ic"><use href="#r3"/></svg>
    <svg class="ic"><use href="#r4"/></svg>
    <svg class="ic"><use href="#r5"/></svg>
    <svg class="ic"><use href="#r6"/></svg>
    <i class="hs"></i>
    <svg class="ic"><use href="#r7"/></svg>
    <svg class="ic"><use href="#r8"/></svg>
    <svg class="ic"><use href="#r9"/></svg>
    <i class="hs"></i>
    <svg class="ic"><use href="#r10"/></svg>
    <svg class="ic"><use href="#r11"/></svg>
    <svg class="ic"><use href="#r12"/></svg>
    <svg class="ic"><use href="#r13"/></svg>
    <svg class="ic"><use href="#r14"/></svg>
    <svg class="ic"><use href="#r15"/></svg>
    <i class="hs"></i>
    <svg class="ic"><use href="#r16"/></svg>
    <svg class="ic"><use href="#r17"/></svg>
    <svg class="ic"><use href="#r18"/></svg>
    <i class="hs"></i>
    <svg class="ic"><use href="#r19"/></svg>
    <svg class="ic"><use href="#r20"/></svg>
    <svg class="ic"><use href="#r21"/></svg>
    <span class="endarrows"><i class="tl"></i><b>»</b></span>
  </aside>
</main>

<div class="sketchbar"><div class="tools t4">
  <i class="g"></i>
  <svg class="ic"><use href="#skt"/></svg>
  <svg class="ic"><use href="#flag"/></svg>
  <span class="tx off">完成草图</span>
  <svg class="ic"><use href="#skc"/></svg>
  <svg class="ic"><use href="#skl"/></svg>
  <svg class="ic"><use href="#ska"/></svg>
  <svg class="ic"><use href="#skr"/></svg>
  <i class="d"></i><i class="s"></i>
  <svg class="ic"><use href="#gsk"/></svg>
  <svg class="ic"><use href="#ghand"/></svg>
  <svg class="ic"><use href="#ghand"/></svg>
  <i class="d"></i><i class="s"></i>
</div></div>

<footer class="status">
  <svg class="ic"><use href="#flag"/></svg>
  <svg class="ic"><use href="#fit"/></svg>
</footer>

<div class="dialog">
  <div class="dhead">
    <svg class="ic dgear"><use href="#gear"/></svg>
    <span class="dtitle">添加可重用组件</span>
    <svg class="ic16"><use href="#resetw"/></svg>
    <svg class="ic16"><use href="#closew"/></svg>
  </div>
  <div class="dbody">
    <div class="dscroll">
      <section class="sec closed"><h3 class="shead">图例<svg class="chev"><use href="#down"/></svg></h3></section>
      <section class="sec">
        <h3 class="shead">主参数<svg class="chev"><use href="#up"/></svg></h3>
        <div class="sbody">
          <div class="row"><label>气缸型号</label><span class="sel">SDA40_20<i class="d"></i></span></div>
        </div>
      </section>
      <section class="sec">
        <h3 class="shead">详细信息<svg class="chev"><use href="#up"/></svg></h3>
        <div class="sbody">
          <div class="grid">
            <div class="ghead"><span>名称</span><span>值</span><span></span></div>
            <div class="gwrap">
              <div class="grows">
                <div class="grow"><span><svg class="ic16"><use href="#lock"/></svg>气缸型号</span><span>SDA40_20</span></div>
                <div class="grow alt"><span><svg class="ic16"><use href="#lock"/></svg>a</span><span>5</span></div>
                <div class="grow"><span><svg class="ic16"><use href="#lock"/></svg>b</span><span>7</span></div>
                <div class="grow alt"><span><svg class="ic16"><use href="#lock"/></svg>travel</span><span>20</span></div>
                <div class="grow"><span><svg class="ic16"><use href="#lock"/></svg>h</span><span>46</span></div>
                <div class="grow alt"><span><svg class="ic16"><use href="#lock"/></svg>p2</span><span>16</span></div>
                <div class="grow"><span></span><span></span></div>
              </div>
              <div class="gsb">
                <svg class="sarrow"><use href="#sup"/></svg>
                <span class="gthumb"></span>
                <svg class="sarrow gdown"><use href="#sdn"/></svg>
              </div>
            </div>
          </div>
        </div>
      </section>
      <section class="sec">
        <h3 class="shead">放置<svg class="chev"><use href="#up"/></svg></h3>
        <div class="sbody">
          <div class="row chk"><span class="cb"><svg viewBox="0 0 12 12"><path fill="none" stroke="#333" stroke-width="1.300" d="M2 6l3 3 5-7"/></svg></span><label>使用自动判断约束</label></div>
          <div class="row chk2"><span class="cb dis"></span><label class="dis">创建组件阵列</label></div>
          <div class="row"><label>多重添加</label><span class="sel">无<i class="d"></i></span></div>
          <div class="row"><label>定位</label><span class="sel">通过约束<i class="d"></i></span></div>
          <div class="row rinput"><label>每次操作的数量</label><span class="num">1</span></div>
          <div class="row rbtn"><label>反向</label><span class="ibtn"><svg class="ic24"><use href="#rev"/></svg></span></div>
        </div>
      </section>
      <section class="sec closed"><h3 class="shead">腔体<svg class="chev"><use href="#down"/></svg></h3></section>
      <section class="sec">
        <h3 class="shead">引用/克隆<svg class="chev"><use href="#up"/></svg></h3>
        <div class="sbody">
          <div class="radios">
            <span class="rad"></span><span>参考</span>
            <span class="rad onr"></span><span>克隆</span>
          </div>
          <div class="row rbtn last"><label>部件名管理</label><span class="ibtn"><svg class="ic24"><use href="#runner"/></svg></span></div>
        </div>
      </section>
      <section class="sec">
        <h3 class="shead">设置<svg class="chev"><use href="#up"/></svg></h3>
        <div class="sbody">
          <div class="row"><label>名称</label><span class="sel">SDA<i class="d"></i></span></div>
        </div>
      </section>
    </div>
    <div class="dsb">
      <svg class="sarrow"><use href="#sup"/></svg>
      <span class="dthumb"></span>
      <svg class="sarrow dsbdown"><use href="#sdn"/></svg>
    </div>
  </div>
  <div class="dfoot">
    <button class="btn ok">确定</button>
    <button class="btn cancel">取消</button>
  </div>
</div>

<div class="watermark">
  <svg class="wmlogo" viewBox="0 0 72 82">
    <path fill="#50bef5" fill-opacity=".72" d="M36 0L72 20V62L36 82 0 62V20z"/>
    <path fill="#fff" fill-opacity=".32" d="M36 0L62 14Q40 6 18 14 2 24 0 44V20z"/>
    <path fill="#fff" fill-opacity=".28" d="M0 20Q8 8 36 0 52 16 48 34L36 28 17 39V62L0 62z"/>
    <path fill="#fff" fill-opacity=".25" d="M0 62V44Q8 62 36 64 54 64 72 48V42Q70 70 36 82z"/>
    <path fill="none" stroke="#e4e9ec" stroke-opacity=".8" stroke-width="1.300" d="M17 30L36 19 55 30V52L36 63 17 52zM0 44Q4 62 36 64 54 64 72 42M36 0Q66 20 55 30"/>
    <path fill="#a6cde2" d="M36 23L53 32 36 41 19 32z"/>
    <path fill="#7cbbdc" d="M19 32L36 41V61L19 52z"/>
    <path fill="#5ba9d1" d="M53 32L36 41V61L53 52z"/>
  </svg>
  <span class="wmtext"><span class="wm3d">3D</span>世界网</span>
</div>
</body>
</html>
```

FILE: styles.css
```css
* { box-sizing: border-box; }
html, body { margin: 0; padding: 0; }
body {
  width: 1365px;
  height: 723px;
  overflow: hidden;
  position: relative;
  background: #fff;
  color: #222;
  font: 12px/16px "Noto Sans", "Noto Sans CJK SC", sans-serif;
}
.defs { position: absolute; width: 0; height: 0; }
h2, h3, ul { margin: 0; padding: 0; font-weight: 400; list-style: none; }
i { font-style: normal; display: block; }

.ic { width: 18px; height: 18px; display: block; }
.ic16 { width: 16px; height: 16px; display: block; flex: none; }
.ic24 { width: 24px; height: 24px; display: block; }

/* title bar */
.titlebar { height: 24px; display: flex; align-items: center; padding-left: 4px; }
.logo { font: 700 24px/20px "Liberation Sans", sans-serif; color: #8296a8; width: 37px; border-right: 1px solid #d0d0d0; height: 20px; flex: none; }
.title { margin-left: 5px; font-size: 13px; white-space: nowrap; }
.siemens { margin-left: auto; font: 700 13px/16px "Liberation Sans", sans-serif; color: #009999; letter-spacing: .35px; }
.win { display: flex; align-items: center; gap: 6px; margin: 0 2px 0 27px; }
.wc { width: 17px; height: 17px; display: block; }

/* menu */
.menubar { height: 27px; background: #c8d8d6; display: flex; align-items: center; gap: 14px; padding: 0 0 3px 6px; white-space: nowrap; color: #2c2c2c; font-size: 11px; }
.appic { margin-right: -8px; }
.menubar u { text-decoration: underline; }
.skip { margin-left: 309px; }
.prefs { margin-left: 7px; }
.subwin { margin-left: auto; display: flex; gap: 2px; margin-right: 2px; }

/* toolbars: each column is the distance from one tool's centre to the next */
.tb { background: #fff; display: flex; align-items: center; }
.tb1 { height: 32px; border-bottom: 2px solid #e4e4e4; padding-top: 1px; }
.tb2 { height: 26px; }
.tb3 { height: 32px; border-bottom: 1px solid #a4a4a4; padding-top: 1px; }
.tools { display: grid; grid-auto-flow: column; align-items: center; justify-items: start; margin-left: -6px; height: 100%; }
.t1 { grid-template-columns: 15px 22px 19px 17px 22px 24px 14px 15px 23px 23px 356px 16px 18px 17px 17px 23px 18px 17px 18px 9px 14px 22px 18px 8px 5px 15px 24px 17px 9px 14px 21px 16px 14px 19px 9px 14px 18px 17px 18px 12px 16px 17px 17px 23px 22px 19px 17px 22px 24px 15px 14px 23px 23px 15px 14px 14px 15px 37px 18px; }
.t2 { width: 1007px; border-bottom: 2px solid #e4e4e4; padding-top: 2px; grid-template-columns: 16px 23px 18px 17px 21px 24px 24px 23px 23px 353px 18px 22px 23px 17px 8px 5px 14px 23px 23px 24px 22px 23px 19px 11px 9px 4px 15px 22px 23px 23px 15px 15px 14px 15px 23px 17px 9px 18px; }
.t3 { margin-left: 5px; grid-template-columns: 140px 398px 23px 22px 25px 21px 24px 23px 23px 24px 20px 15px 15px 570px 18px; }
.t4 { grid-template-columns: 15px 24px 21px 51px 22px 24px 22px 360px 7px 15px 21px 26px 16px 8px 18px; }
.g { width: 18px; height: 24px; background: repeating-linear-gradient(to bottom, #aaa 0 2px, transparent 2px 4px) center / 2px 100% no-repeat; }
.s { width: 18px; height: 24px; background: linear-gradient(#d8d8d8, #d8d8d8) center / 1px 100% no-repeat; }
.d { width: 18px; height: 4px; position: relative; }
.d::after { content: ""; position: absolute; left: 5px; top: 0; border: 4px solid transparent; border-top-color: #222; border-bottom: 0; }
.low { transform: translateY(6px); }
.low2 { transform: translateY(2px); }
.dim::after { border-top-color: #aaa; }
.tx { white-space: nowrap; }
.tx.off { color: #c4c4c4; }
.more { width: 18px; display: flex; flex-direction: column; align-items: center; gap: 2px; line-height: 14px; font-size: 15px; }
.more b { display: block; height: 14px; }
.combo { display: flex; align-items: center; height: 18px; border: 1px solid #b4b4b4; background: #fff; color: #bbb; white-space: nowrap; overflow: hidden; padding-left: 3px; font-size: 11px; }
.c1 { width: 132px; justify-content: flex-end; padding-right: 4px; }
.c1 .d { width: 10px; }
.c1 .d::after { left: 1px; }
.c2 { width: 53px; }

/* main region */
.main { display: flex; height: 537px; }
.rail { width: 26px; flex: none; background: #dcdcdc; display: grid; isolation: isolate; justify-items: center; align-items: start; padding-top: 4px; grid-template-rows: 46px 34px 34px 34px 47px 44px 46px 36px 33px 34px 34px 30px 14px 15px 16px 15px 18px; }
.gearb { color: #333; }
.wide { width: 26px; }
.on { position: relative; display: block; width: 18px; height: 18px; }
.on::before { content: ""; position: absolute; z-index: -1; left: -7px; top: -9px; width: 27px; height: 37px; background: #fff; border: 1px solid #c8c8c8; border-right: 0; }
.arr { display: block; width: 18px; height: 18px; position: relative; }
.arr::after { content: ""; position: absolute; left: 5px; top: 7px; border: 4px solid transparent; }
.up1::after, .up2::after { border-bottom-color: #aaa; border-top: 0; }
.up2::before, .dn2::before { content: ""; position: absolute; left: 5px; width: 8px; height: 1px; }
.up2::before { top: 12px; background: #aaa; }
.dn1::after, .dn2::after { border-top-color: #222; border-bottom: 0; }
.dn2::before { top: 13px; background: #222; }

.panel { width: 172px; flex: none; display: flex; flex-direction: column; background: #fff; }
.ptitle { height: 29px; line-height: 29px; font-size: 12px; padding-left: 8px; flex: none; }
.treebox { width: 167px; margin-left: 5px; height: 192px; flex: none; border: 1px solid #cfcfcf; border-bottom: 4px solid #bbb; overflow: hidden; }
.treehead { height: 21px; background: #eee; padding-left: 6px; line-height: 21px; border-bottom: 1px solid #ddd; }
.tree { position: relative; }
.tree::before, .tree::after { content: ""; position: absolute; z-index: 1; top: 0; height: 170px; border-left: 1px dotted #888; }
.tree::before { left: 9px; }
.tree::after { left: 28px; top: 20px; height: 132px; }
.tr { height: 20px; position: relative; display: flex; align-items: center; padding-left: 38px; white-space: nowrap; }
.tr.alt { background: #fafafa; }
.tr .ic16 { margin-right: 3px; }
.leaf { padding-top: 1px; }
.root { padding-left: 19px; z-index: 2; }
.root span:last-child { font-size: 13px; }
.exp { width: 9px; height: 9px; border: 1px solid #aaa; background: linear-gradient(#333, #333) center / 5px 1px no-repeat #fff; position: absolute; left: 5px; top: 6px; }
.leaf::before { content: ""; position: absolute; left: 29px; top: 10px; width: 9px; border-top: 1px dotted #888; }
.cur span { background: #3399ff; color: #fff; flex: 1; margin-left: -3px; padding-left: 3px; height: 19px; line-height: 18px; }
.pgroup { font-size: 14px; line-height: 22px; color: #3a96c4; padding-left: 7px; }
.search { height: 24px; flex: none; padding-top: 2px; border-bottom: 2px solid #ccc; padding-left: 11px; }
.members { margin-left: 4px; height: 262px; flex: none; border-left: 2px solid #e0e0e0; border-bottom: 2px solid #e0e0e0; padding-top: 2px; }
.mtools { display: flex; align-items: flex-start; gap: 2px; margin: 4px 0 0 5px; height: 33px; white-space: nowrap; }
.mbtn { width: 53px; height: 33px; flex: none; border: 1px solid #aaa; display: flex; align-items: center; justify-content: space-between; padding-left: 6px; }
.mbtn .d.sm { width: 14px; }
.mbtn .d.sm::after { left: 0; }
.mbtn .big { width: 24px; height: 24px; margin-left: 2px; }
.mbtn.light { width: 32px; border-color: #ddd; padding-left: 5px; }
.count { margin-top: 12px; flex: none; }
.mlist { margin: 3px 0 0 5px; height: 191px; border: 1px solid #ddd; border-right: 0; }
.mlist li { height: 23px; display: flex; align-items: center; gap: 4px; padding-left: 2px; white-space: nowrap; }
.mlist li.on2 { background: #c8d8d6; outline: 1px solid #a4c0bc; outline-offset: -1px; }
.preview { height: 24px; flex: none; border-bottom: 2px solid #ccc; padding-left: 11px; margin-top: 2px; }

.vp { flex: 1; background: #b4b5b8; border-right: 1px solid #f0a24e; border-bottom: 1px solid #f0a24e; min-width: 0; }
.scene { width: 1115px; height: 536px; display: block; }
.lbl { font: 700 15px "Liberation Sans", sans-serif; fill: #41484c; text-anchor: middle; }
.axz { font: 11px "Liberation Sans", sans-serif; fill: #1a34d0; }
.axx { font: 11px "Liberation Sans", sans-serif; fill: #d05050; }

.colors { width: 26px; height: 252px; flex: none; background: #fff; border-right: 1px solid #eee; border-bottom: 2px solid #e0e0e0; display: flex; flex-direction: column; align-items: center; gap: 7px; padding-top: 3px; }
.colors .grip { margin-bottom: 1px; }
.grip { width: 18px; height: 2px; background: repeating-linear-gradient(to right, #aaa 0 2px, transparent 2px 4px); }
.sw { width: 16px; height: 16px; display: block; flex: none; font-size: 12px; line-height: 16px; text-align: center; }
.red { background: #f44040; } .green { background: #44f040; } .blue { background: #4040f0; }
.mag { background: #f040f0; } .cyan { background: #40f0f0; } .yel { background: #f0f040; }
.lgt { background: #eee; } .drk { background: #3c3c3c; }
.txt { color: #777; }
.dark-red { color: #b03030; }
.tl { width: 0; height: 0; border: 4px solid transparent; border-right-color: #222; border-left: 0; }
.rtools { width: 25px; flex: none; border-bottom: 2px solid #e4e4e4; border-left: 1px solid #f0f0f0; display: grid; justify-items: center; align-items: start; padding-top: 3px; grid-template-rows: 8px 23px 22px 23px 24px 23px 22px 4px 25px 24px 22px 5px 24px 24px 22px 23px 23px 24px 5px 23px 22px 24px 6px 23px 24px 24px 18px; }
.zi { width: 18px; height: 18px; font-size: 15px; line-height: 18px; text-align: center; color: #7f9fd8; display: block; }
.hs { width: 18px; height: 1px; background: #ddd; margin-top: 8px; }
.endarrows { display: flex; align-items: center; gap: 2px; margin-top: 3px; font-size: 13px; line-height: 12px; }

.sketchbar { height: 28px; border-bottom: 1px solid #aaa; background: #fff; }
.t4 { height: 27px; }
.status { height: 17px; display: flex; align-items: center; justify-content: flex-end; gap: 3px; padding-right: 53px; }
.status .ic { width: 18px; height: 17px; }

/* dialog */
.dialog { position: absolute; left: 198px; top: 0; width: 344px; height: 723px; display: flex; flex-direction: column; background: #eee; }
.dhead { height: 22px; background: #5d8880; color: #fff; display: flex; align-items: center; padding: 0 6px 0 6px; gap: 5px; flex: none; }
.dgear { width: 17px; height: 17px; color: #fff; }
.dtitle { font-size: 13px; color: #dbe8e5; margin: 0 auto 0 2px; }
.dbody { height: 660px; display: flex; flex: none; overflow: hidden; }
.dscroll { width: 317px; margin-left: 5px; padding-top: 4px; flex: none; display: flex; flex-direction: column; gap: 3px; }
.sec { background: #fff; border-bottom: 1px solid #c8c8c8; box-shadow: 0 1px 0 #ddd; flex: none; }
.sec.closed { height: 24px; overflow: hidden; }
.shead { height: 26px; display: flex; align-items: center; justify-content: space-between; padding: 0 6px 0 7px; font-size: 14px; color: #3a96c4; }
.chev { width: 13px; height: 10px; display: block; }
.sbody { padding: 4px 10px 8px 9px; }
.row { display: flex; align-items: center; justify-content: space-between; height: 25px; margin-bottom: 2px; }
.row:last-child { margin-bottom: 0; }
.chk { height: 21px; justify-content: flex-start; gap: 5px; margin-bottom: 0; }
.chk2 { height: 25px; justify-content: flex-start; gap: 5px; margin-bottom: 0; }
.rinput { height: 22px; margin-bottom: 3px; }
.rbtn { height: 32px; }
.cb { width: 13px; height: 13px; border: 1px solid #444; display: block; }
.cb svg { display: block; width: 11px; height: 11px; }
.cb.dis { border-color: #ccc; }
label.dis { color: #b0b0b0; }
.sel { width: 141px; height: 25px; border: 1px solid #a8a8a8; display: flex; align-items: center; justify-content: space-between; padding-left: 4px; background: #fff; }
.sel .d { width: 14px; }
.sel .d::after { left: 2px; }
.num { width: 82px; height: 22px; border: 1px solid #aaa; text-align: right; padding-right: 4px; font: 16px/20px "Liberation Mono", monospace; }
.ibtn { width: 32px; height: 32px; border: 1px solid #aaa; display: flex; align-items: center; justify-content: center; }
.grid { border: 1px solid #d4d4d4; height: 147px; padding: 1px; overflow: hidden; }
.ghead { height: 21px; background: #eee; display: grid; grid-template-columns: 116px 150px 1fr; line-height: 21px; border-bottom: 1px solid #ddd; }
.ghead span { padding-left: 6px; border-right: 1px solid #d4d4d4; }
.ghead span:last-child { border: 0; }
.gwrap { display: flex; }
.grows { width: 279px; flex: none; }
.grow { height: 20px; display: grid; grid-template-columns: 116px 1fr; border-bottom: 1px solid #eee; line-height: 19px; }
.grow.alt { background: #fafafa; }
.grow span { display: flex; align-items: center; gap: 3px; padding-left: 4px; white-space: nowrap; border-right: 1px solid #eee; }
.grow span:first-child { padding-left: 0; }
.gsb { width: 15px; margin-left: 1px; height: 122px; display: flex; flex-direction: column; align-items: center; padding-top: 6px; }
.sarrow { width: 12px; height: 8px; display: block; flex: none; }
.gthumb { display: block; width: 15px; height: 17px; background: #c8c8c8; flex: none; }
.gdown { margin-top: auto; margin-bottom: 5px; }
.radios { height: 32px; background: #f0f5f5; border: 1px solid #d4dcdc; display: flex; align-items: center; gap: 4px; padding-left: 4px; margin-bottom: 2px; }
.rad { width: 14px; height: 14px; border: 1px solid #444; border-radius: 50%; background: #fff; display: block; }
.rad.onr { background: radial-gradient(circle, #333 0 3.5px, #fff 4px); margin-left: 10px; }
.last { margin-bottom: 0; }
.dsb { width: 16px; display: flex; flex-direction: column; align-items: center; padding-top: 9px; }
.dthumb { display: block; width: 15px; height: 481px; background: #aaa; margin-top: 4px; flex: none; }
.dsbdown { margin-top: auto; margin-bottom: 4px; }
.dfoot { flex: 1; background: #e9e9e9; display: flex; justify-content: flex-end; gap: 5px; padding: 8px 16px 0 0; }
.btn { width: 54px; height: 25px; font: 12px/16px "Noto Sans", "Noto Sans CJK SC", sans-serif; color: #222; padding: 0; }
.ok { background: #9ccbe5; border: 1px solid #4aa3d8; }
.cancel { background: #c8c8ca; border: 1px solid #adadad; }

/* watermark */
.watermark { position: absolute; left: 1082px; top: 628px; display: flex; align-items: flex-start; pointer-events: none; }
.wmlogo { width: 72px; height: 82px; display: block; }
.wmtext { margin: 6px 0 0 8px; font: 700 36px/46px "Liberation Sans", "Noto Sans CJK SC", sans-serif; letter-spacing: 4px; color: #fff; opacity: .47; white-space: nowrap; }
.wm3d { font-size: 46px; letter-spacing: 3px; }
```
